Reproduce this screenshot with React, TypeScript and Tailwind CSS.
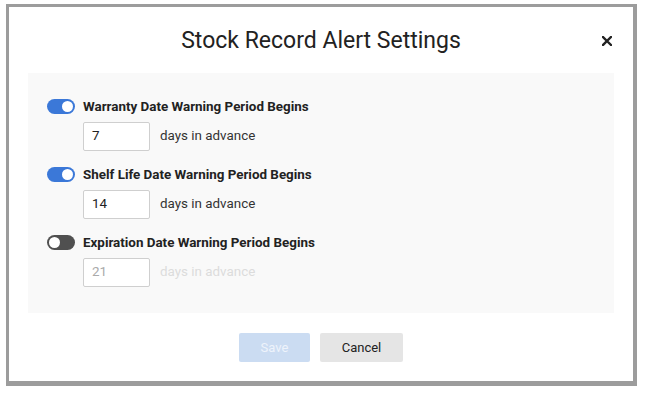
import React from "react";

function Toggle({ on }: { on: boolean }) {
  return (
    <div
      className={`relative h-[15px] w-[28px] shrink-0 rounded-full ${on ? "bg-[#3b78d8]" : "bg-[#505050]"}`}
    >
      <div
        className={`absolute top-[2px] h-[11px] w-[11px] rounded-full bg-white ${on ? "right-[2px]" : "left-[2px]"}`}
      />
    </div>
  );
}

function Row({ label, value, on, last }: { label: string; value: string; on: boolean; last?: boolean }) {
  return (
    <div className={last ? "" : "mb-[16px]"}>
      <div className="flex h-[15px] items-center gap-[8px]">
        <Toggle on={on} />
        <span className="text-[13.4px] font-bold leading-none text-[#222]">{label}</span>
      </div>
      <div className="mt-[8px] flex items-center pl-[36px]">
        <div
          className={`flex h-[29px] w-[67px] items-center rounded-[2px] border border-[#cfcfcf] bg-white pl-[8px] text-[13.4px] ${on ? "text-[#222]" : "text-[#aaa]"}`}
        >
          {value}
        </div>
        <span className={`ml-[10px] text-[13.4px] ${on ? "text-[#333]" : "text-[#dcdcdc]"}`}>days in advance</span>
      </div>
    </div>
  );
}

export default function App() {
  return (
    <div
      className="h-[394px] w-[647px] overflow-hidden bg-white"
      style={{ fontFamily: "Roboto, 'Liberation Sans', sans-serif" }}
    >
      <div className="ml-[6px] mt-[4px] h-[382px] w-[631px] bg-[#9c9c9c] pb-[5px] pl-[3px] pr-[4px] pt-[3px]">
        <div className="flex h-full w-full flex-col bg-white">
          <div className="relative flex h-[66px] items-center justify-center">
            <span className="text-[23px] leading-none text-[#222]">Stock Record Alert Settings</span>
            <svg
              className="absolute right-[21px] top-[29px]"
              width="10"
              height="10"
              viewBox="0 0 10 10"
            >
              <path d="M1 1 L9 9 M9 1 L1 9" stroke="#222" strokeWidth="2.4" strokeLinecap="square" />
            </svg>
          </div>
          <div className="mx-[19px] h-[240px] bg-[#f9f9f9] pl-[19px] pt-[26px]">
            <Row label="Warranty Date Warning Period Begins" value="7" on />
            <Row label="Shelf Life Date Warning Period Begins" value="14" on />
            <Row label="Expiration Date Warning Period Begins" value="21" on={false} last />
          </div>
          <div className="mt-[20px] flex justify-center gap-[10px]">
            <button className="h-[29px] w-[71px] rounded-[2px] bg-[#cbdcf2] text-[13px] text-[#eef3fb]">Save</button>
            <button className="h-[29px] w-[83px] rounded-[2px] bg-[#e5e5e5] text-[13px] text-[#222]">Cancel</button>
          </div>
        </div>
      </div>
    </div>
  );
}
